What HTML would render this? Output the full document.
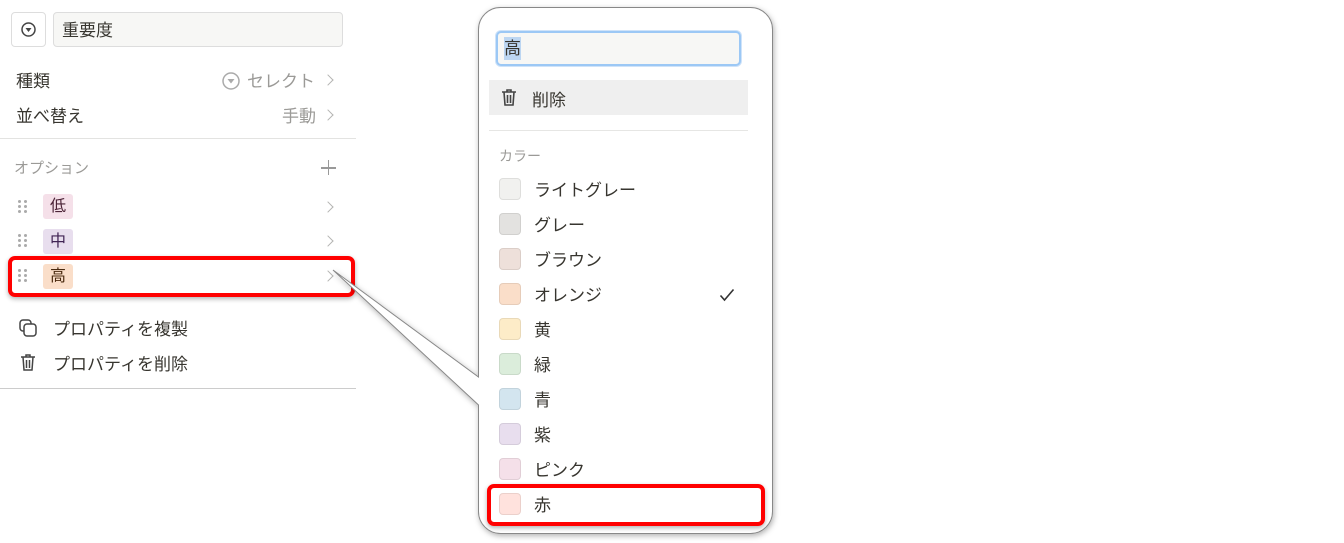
<!DOCTYPE html>
<html><head><meta charset="utf-8"><style>
*{margin:0;padding:0;box-sizing:border-box}
body{width:1344px;height:543px;background:#fff;position:relative;overflow:hidden;font-family:"Liberation Sans","Noto Sans CJK JP",sans-serif;color:#37352f}
.a{position:absolute}
.t{font-size:16px;line-height:20px}
.g{color:#9b9a97}
.dots{position:absolute;width:10px;height:14px}
.dots i{position:absolute;width:3px;height:3px;border-radius:50%;background:#aaa}
.tag{position:absolute;left:43px;height:25px;padding:2px 7px;border-radius:3px;font-size:16px;line-height:22px}
.sw{position:absolute;left:499px;width:22px;height:22px;border-radius:4px;border:1px solid rgba(0,0,0,.08)}
.cl{position:absolute;left:534px;font-size:17px;line-height:20px}
.chev{position:absolute;width:8px;height:8px;border-right:1.5px solid #b4b4b2;border-top:1.5px solid #b4b4b2;transform:rotate(45deg)}
</style></head><body>
<div class="a" style="left:11px;top:12px;width:35px;height:35px;border:1px solid #ddd;border-radius:4px"></div>
<svg class="a" style="left:20px;top:21px" width="17" height="17"><circle cx="8.5" cy="8.5" r="6.5" fill="none" stroke="#444" stroke-width="1.5"/><path d="M5.5 7h6l-3 4z" fill="#444"/></svg>
<div class="a" style="left:53px;top:12px;width:290px;height:35px;border:1px solid #ddd;border-radius:4px;background:#f7f7f5"></div>
<div class="a t" style="left:62px;top:21px;font-size:17px">重要度</div>
<div class="a t" style="left:16px;top:72px;font-size:17px">種類</div>
<svg class="a" style="left:221px;top:71px" width="20" height="20"><circle cx="10" cy="10" r="8" fill="none" stroke="#aaa" stroke-width="1.5"/><path d="M6.5 8h7l-3.5 4.5z" fill="#aaa"/></svg>
<div class="a t g" style="left:247px;top:72px;font-size:17px">セレクト</div>
<div class="chev" style="left:324px;top:76px"></div>
<div class="a t" style="left:16px;top:107px;font-size:17px">並べ替え</div>
<div class="a t g" style="left:282px;top:107px;font-size:17px">手動</div>
<div class="chev" style="left:324px;top:111px"></div>
<div class="a" style="left:0;top:138px;width:356px;height:1px;background:#e3e3e1"></div>
<div class="a g" style="left:14px;top:159px;font-size:15px;line-height:20px">オプション</div>
<div class="a" style="left:321px;top:167px;width:15px;height:1.5px;background:#999"></div>
<div class="a" style="left:327.5px;top:160px;width:1.5px;height:15px;background:#999"></div>

<div class="dots" style="left:18px;top:200px"><i style="left:0;top:0"></i><i style="left:6px;top:0"></i><i style="left:0;top:5px"></i><i style="left:6px;top:5px"></i><i style="left:0;top:10px"></i><i style="left:6px;top:10px"></i></div>
<div class="tag" style="top:194px;background:#f5e0e9;color:#4c2337">低</div>
<div class="chev" style="left:324px;top:203px"></div>
<div class="dots" style="left:18px;top:234px"><i style="left:0;top:0"></i><i style="left:6px;top:0"></i><i style="left:0;top:5px"></i><i style="left:6px;top:5px"></i><i style="left:0;top:10px"></i><i style="left:6px;top:10px"></i></div>
<div class="tag" style="top:229px;background:#e8deee;color:#412454">中</div>
<div class="chev" style="left:324px;top:237px"></div>
<div class="dots" style="left:18px;top:269px"><i style="left:0;top:0"></i><i style="left:6px;top:0"></i><i style="left:0;top:5px"></i><i style="left:6px;top:5px"></i><i style="left:0;top:10px"></i><i style="left:6px;top:10px"></i></div>
<div class="tag" style="top:264px;background:#fadec9;color:#49290e">高</div>
<div class="chev" style="left:324px;top:272px"></div>
<div class="a" style="left:8px;top:256px;width:347px;height:41px;border:4px solid #f00;border-radius:7px;box-shadow:0 2px 5px rgba(0,0,0,.3)"></div>

<svg class="a" style="left:18px;top:318px" width="22" height="22"><rect x="2" y="2" width="11" height="11" rx="3" fill="none" stroke="#444" stroke-width="1.5"/><rect x="6" y="6" width="12" height="12" rx="3" fill="#fff" stroke="#444" stroke-width="1.5"/></svg>
<div class="a t" style="left:53px;top:320px;font-size:17px">プロパティを複製</div>
<svg class="a" style="left:19px;top:353px" width="18" height="20"><path d="M2 4h14M7 4V2h4v2M4 4l1 13h8l1-13M7.5 7v8M10.5 7v8" fill="none" stroke="#444" stroke-width="1.5"/></svg>
<div class="a t" style="left:53px;top:355px;font-size:17px">プロパティを削除</div>
<div class="a" style="left:0;top:388px;width:356px;height:1px;background:#ccc"></div>

<svg class="a" style="left:0;top:0" width="1344" height="543">
<defs><filter id="s" x="-10%" y="-10%" width="130%" height="130%"><feDropShadow dx="1" dy="2" stdDeviation="3" flood-opacity=".3"/></filter></defs>
<path d="M500.5 7.5H750.5A22 22 0 0 1 772.5 29.5V511.5A22 22 0 0 1 750.5 533.5H500.5A22 22 0 0 1 478.5 511.5V405L333 270L478.5 377V29.5A22 22 0 0 1 500.5 7.5Z" fill="#fff" stroke="#888" stroke-width="1" filter="url(#s)"/>
</svg>

<div class="a" style="left:496px;top:31px;width:245px;height:35px;border:2px solid #9cc8f5;border-radius:5px;background:#f7f7f5;box-shadow:0 0 0 1px #cfe3f9"></div>
<div class="a" style="left:504px;top:37px;height:23px;background:#bcd6f2;font-size:17px;line-height:23px">高</div>
<div class="a" style="left:489px;top:80px;width:259px;height:35px;background:#efefef"></div>
<svg class="a" style="left:500px;top:88px" width="18" height="20"><path d="M2 4h14M7 4V2h4v2M4 4l1 13h8l1-13M7.5 7v8M10.5 7v8" fill="none" stroke="#444" stroke-width="1.6"/></svg>
<div class="a" style="left:532px;top:91px;font-size:17px;line-height:20px">削除</div>
<div class="a" style="left:489px;top:130px;width:259px;height:1px;background:#e6e6e4"></div>
<div class="a g" style="left:499px;top:147px;font-size:14px;line-height:18px">カラー</div>

<div class="sw" style="top:178px;background:#f1f1ef"></div><div class="cl" style="top:181px">ライトグレー</div>
<div class="sw" style="top:213px;background:#e3e2e0"></div><div class="cl" style="top:216px">グレー</div>
<div class="sw" style="top:248px;background:#eee0da"></div><div class="cl" style="top:251px">ブラウン</div>
<div class="sw" style="top:283px;background:#fadec9"></div><div class="cl" style="top:286px">オレンジ</div>
<svg class="a" style="left:719px;top:288px" width="16" height="14"><path d="M1.5 7.5l4 4.5L14.5 1.5" fill="none" stroke="#333" stroke-width="1.6"/></svg>
<div class="sw" style="top:318px;background:#fdecc8"></div><div class="cl" style="top:321px">黄</div>
<div class="sw" style="top:353px;background:#dbeddb"></div><div class="cl" style="top:356px">緑</div>
<div class="sw" style="top:388px;background:#d3e5ef"></div><div class="cl" style="top:391px">青</div>
<div class="sw" style="top:423px;background:#e8deee"></div><div class="cl" style="top:426px">紫</div>
<div class="sw" style="top:458px;background:#f5e0e9"></div><div class="cl" style="top:461px">ピンク</div>
<div class="sw" style="top:493px;background:#ffe2dd"></div><div class="cl" style="top:496px">赤</div>
<div class="a" style="left:487px;top:484px;width:278px;height:42px;border:4px solid #f00;border-radius:7px;box-shadow:0 2px 5px rgba(0,0,0,.3)"></div>
</body></html>
